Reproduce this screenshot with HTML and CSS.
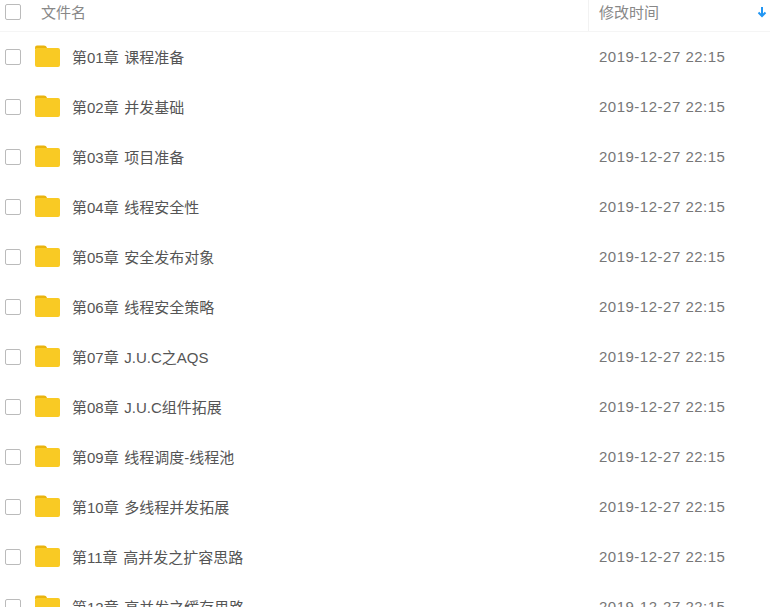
FILE: index.html
```html
<!DOCTYPE html>
<html lang="zh-CN">
<head>
    <meta charset="UTF-8">
    <title>文件列表</title>
    <link rel="stylesheet" href="styles.css">
</head>
<body>
    <div class="list">
        <div class="head">
            <div class="name-col">
                <span class="check"></span>
                <span class="head-label">文件名</span>
            </div>
            <div class="time-col">
                <span class="head-label">修改时间</span>
                <svg class="sort" width="10" height="12" viewBox="0 0 10 12"><path d="M5 1v9M1.500 6.500L5 10l3.500-3.500" fill="none" stroke="#2196f3" stroke-width="2"/></svg>
            </div>
        </div>
        <div class="rows" id="rows"></div>
    </div>
    <script>
        const names = [
            '第01章 课程准备', '第02章 并发基础', '第03章 项目准备', '第04章 线程安全性',
            '第05章 安全发布对象', '第06章 线程安全策略', '第07章 J.U.C之AQS', '第08章 J.U.C组件拓展',
            '第09章 线程调度-线程池', '第10章 多线程并发拓展', '第11章 高并发之扩容思路', '第12章 高并发之缓存思路'
        ];
        const folder = '<svg class="folder" width="26" height="22" viewBox="0 0 26 22"><path d="M0 2.500Q0 0.500 2 0.500H9Q11 0.500 12 2.500V4H0Z" fill="#e9b40f"/><rect x="0" y="3" width="25" height="19" rx="2" fill="#f9ca24"/></svg>';
        document.getElementById('rows').innerHTML = names.map(n => `
            <div class="row">
                <span class="check"></span>
                ${folder}
                <span class="file-name">${n}</span>
                <span class="file-time">2019-12-27 22:15</span>
            </div>`).join('');
    </script>
</body>
</html>
```

FILE: styles.css
```css
html, body {
    height: 100%;
    overflow: hidden;
}
body {
    margin: 0;
    background: #fff;
    font-family: "Liberation Sans", "Noto Sans CJK SC", sans-serif;
    font-size: 15px;
    color: #666;
}
.head {
    display: flex;
    height: 31px;
    border-bottom: 1px solid #f5f5f5;
}
.name-col {
    width: 588px;
    display: flex;
    align-items: center;
    padding: 0 0 7px 5px;
    box-sizing: border-box;
}
.name-col .head-label {
    margin-left: 20px;
    margin-top: -1px;
}
.time-col {
    flex: 1;
    display: flex;
    align-items: center;
    justify-content: space-between;
    border-left: 1px solid #f2f2f2;
    padding: 0 3px 7px 10px;
}
.time-col .head-label {
    margin-top: -1px;
}
.head-label {
    color: #888;
}
.check {
    flex: none;
    width: 14px;
    height: 14px;
    border: 1px solid #bbb;
    border-radius: 2px;
}
.row {
    display: flex;
    align-items: center;
    height: 50px;
    padding-left: 5px;
}
.folder {
    flex: none;
    margin: -2px 0 0 14px;
}
.file-name {
    width: 527px;
    margin-left: 11px;
    margin-top: -1px;
    color: #555;
    word-spacing: 1.500px;
}
.file-time {
    color: #777;
    letter-spacing: 0.500px;
    margin-top: -1px;
}
```
